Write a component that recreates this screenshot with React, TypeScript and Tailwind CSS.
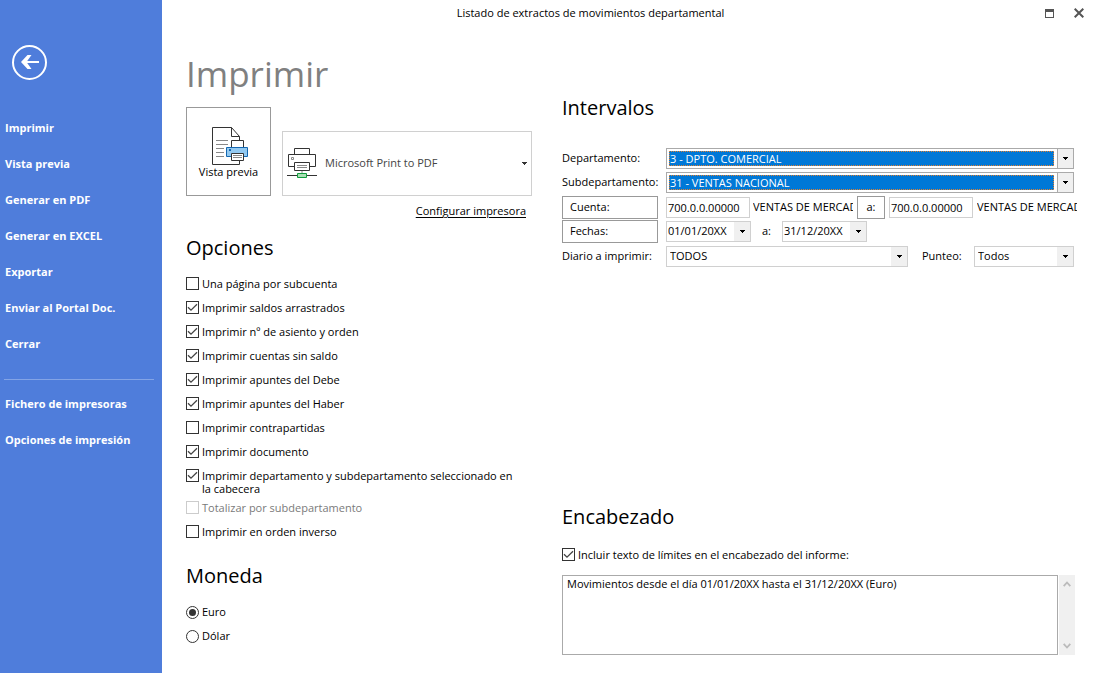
import { useState } from 'react'
import type { ReactNode } from 'react'

const menu = ['Imprimir', 'Vista previa', 'Generar en PDF', 'Generar en EXCEL', 'Exportar', 'Enviar al Portal Doc.', 'Cerrar']
const menuImpresoras = ['Fichero de impresoras', 'Opciones de impresión']

const opciones = [
  { texto: 'Una página por subcuenta', activo: false },
  { texto: 'Imprimir saldos arrastrados', activo: true },
  { texto: 'Imprimir nº de asiento y orden', activo: true },
  { texto: 'Imprimir cuentas sin saldo', activo: true },
  { texto: 'Imprimir apuntes del Debe', activo: true },
  { texto: 'Imprimir apuntes del Haber', activo: true },
  { texto: 'Imprimir contrapartidas', activo: false },
  { texto: 'Imprimir documento', activo: true },
  { texto: 'Imprimir departamento y subdepartamento seleccionado en la cabecera', activo: true },
  { texto: 'Totalizar por subdepartamento', activo: false, bloqueado: true },
  { texto: 'Imprimir en orden inverso', activo: false },
]

function Titulo({ children }: { children: ReactNode }) {
  return <h2 className="text-xl leading-8">{children}</h2>
}

function Casilla({ texto, activo, bloqueado = false }: { texto: string; activo: boolean; bloqueado?: boolean }) {
  const [marcado, setMarcado] = useState(activo)
  return (
    <label className={`flex min-h-6 items-start gap-[3px] pt-[5px] pb-px leading-[13px] ${bloqueado ? 'text-[#7a7a7a]' : ''}`}>
      <span className="grid shrink-0">
        <input
          type="checkbox"
          checked={marcado}
          disabled={bloqueado}
          onChange={(e) => setMarcado(e.target.checked)}
          className="col-start-1 row-start-1 size-[13px] appearance-none border border-[#333] bg-white disabled:border-[#ccc]"
        />
        {marcado && (
          <svg viewBox="0 0 13 13" className="pointer-events-none col-start-1 row-start-1 size-[13px]" fill="none" stroke="#444" strokeWidth="1.3">
            <path d="M2 6.2 5 9.2 11 3.3" />
          </svg>
        )}
      </span>
      <span>{texto}</span>
    </label>
  )
}

function Desplegable({ id, etiqueta, valor, clase, resaltado = false }: { id: string; etiqueta?: string; valor: string; clase: string; resaltado?: boolean }) {
  return (
    <div className={`grid h-[21px] border bg-white ${resaltado ? 'border-[#aaa]' : 'border-[#d0d0d0]'} ${clase}`}>
      <select
        id={id}
        aria-label={etiqueta}
        className={`col-start-1 row-start-1 min-w-0 appearance-none outline-none ${
          resaltado
            ? 'my-0.5 mr-[19px] ml-0.5 border border-dotted border-[#e08030] bg-[#0078d7] leading-3 text-white'
            : etiqueta ? 'pl-px' : 'px-[3px]'
        }`}
      >
        <option>{valor}</option>
      </select>
      <span className={`pointer-events-none col-start-1 row-start-1 flex w-4 items-center justify-center justify-self-end bg-[#f0f0f0] ${resaltado ? 'border-l border-[#aaa]' : ''}`}>
        <svg viewBox="0 0 5 3" className="h-[3px] w-[5px]" shapeRendering="crispEdges">
          <path d="M0 0h5v1H4v1H3v1H2V2H1V1H0z" />
        </svg>
      </span>
    </div>
  )
}

function IconoVistaPrevia() {
  return (
    <svg viewBox="0 0 37 38" className="ml-1 h-[38px] w-[37px]" fill="none" stroke="#333">
      <path d="M19.5.5H.5v37h27V9.5L19.5.5v9h8" fill="#fff" />
      <path d="M4 13.5h12M4 17.5h12M4 21.5h8M4 25.5h8M4 29.5h8" stroke="#888" />
      <path d="M19.5 13.5h12v8h-12z" fill="#fff" />
      <path d="M14.5 20.5h21v9h-21z" fill="#92c9f1" stroke="#1467b0" />
      <path d="M17 23h2" stroke="#1467b0" strokeWidth="2" />
      <path d="M19.5 26.5h12v7h-12z" fill="#fff" />
      <path d="M21 28.5h9M21 30.5h9" stroke="#888" />
    </svg>
  )
}

function IconoImpresora() {
  return (
    <svg viewBox="0 0 30 31" className="h-[31px] w-[30px] shrink-0" fill="none" stroke="#333">
      <path d="M7.5.5h15v6h-15z" fill="#fff" />
      <path d="M1.5 6.5h27v12h-27z" fill="#fff" />
      <path d="M4.5 9.5h2v2h-2z" stroke="#888" />
      <path d="M7.5 14.5h15v8h-15z" fill="#fff" />
      <path d="M10 17.5h10M10 19.5h10M15 23v2" stroke="#888" />
      <path d="M0 27.5h30" />
      <path d="M10.5 25.5h9v4h-9z" fill="#a9dfb4" stroke="#109b3c" />
    </svg>
  )
}

export default function App() {
  const [moneda, setMoneda] = useState('Euro')

  return (
    <div className="flex min-h-screen bg-white font-['Open_Sans',sans-serif] text-[11px] text-black">
      <aside className="w-[162px] shrink-0 bg-[#4f7ddb] pt-[45px] text-white">
        <button aria-label="Volver" className="ml-3 block">
          <svg viewBox="0 0 35 35" className="size-[35px]" fill="none" stroke="#fff">
            <circle cx="17.5" cy="17.5" r="16.5" strokeWidth="2" />
            <path d="M27 17H12" strokeWidth="2" />
            <path d="M9 17 15.500 10H19.500L14.500 17 19.500 24H15.500z" fill="#fff" stroke="none" />
          </svg>
        </button>
        <nav className="mt-[30px] font-bold">
          {menu.map((m) => (
            <button key={m} className="block h-9 w-full pl-[5px] text-left">{m}</button>
          ))}
          <hr className="mt-[17px] mr-2 mb-1.5 ml-1 border-[#83a4e6]" />
          {menuImpresoras.map((m) => (
            <button key={m} className="block h-9 w-full pl-[5px] text-left">{m}</button>
          ))}
        </nav>
      </aside>

      <div className="flex min-w-0 flex-1 flex-col">
        <header className="flex h-[26px] items-center">
          <p className="flex-1 text-center">Listado de extractos de movimientos departamental</p>
          <div className="flex h-5 w-[74px] items-center gap-5 pl-[26px]">
            <button aria-label="Maximizar">
              <svg viewBox="0 0 9 9" className="size-[9px]" fill="#555" shapeRendering="crispEdges">
                <path fillRule="evenodd" d="M0 0h9v9H0zM1 3v5h7V3z" />
              </svg>
            </button>
            <button aria-label="Cerrar ventana">
              <svg viewBox="0 0 10 10" className="size-2.5" stroke="#555" strokeWidth="2">
                <path d="M.7.7l8.6 8.6M9.3.7.7 9.3" />
              </svg>
            </button>
          </div>
        </header>

        <main className="flex gap-[30px] pr-4 pl-6">
          <section className="w-[346px] shrink-0 pt-6 pb-[7px]">
            <h1 className="text-[35px] leading-[48px] text-[#808080]">Imprimir</h1>
            <div className="mt-[9px] flex items-end gap-[11px]">
              <button className="flex h-[89px] w-[85px] shrink-0 flex-col items-center border border-[#999] pt-[19px] leading-[14px]">
                <IconoVistaPrevia />
                Vista previa
              </button>
              <button className="flex h-[65px] flex-1 items-center gap-2 border border-[#d0d0d0] px-1 text-[#444]">
                <IconoImpresora />
                <span className="flex-1 text-left">Microsoft Print to PDF</span>
                <svg viewBox="0 0 5 3" className="h-[3px] w-[5px]" fill="#333" shapeRendering="crispEdges">
                  <path d="M0 0h5v1H4v1H3v1H2V2H1V1H0z" />
                </svg>
              </button>
            </div>
            <div className="mt-1.5 pr-1.5 text-right leading-[18px]">
              <a href="#configurar" className="underline underline-offset-2">Configurar impresora</a>
            </div>

            <div className="mt-3">
              <Titulo>Opciones</Titulo>
              <div className="mt-2 pr-4">
                {opciones.map((o) => <Casilla key={o.texto} {...o} />)}
              </div>
            </div>

            <div className="mt-4">
              <Titulo>Moneda</Titulo>
              <div className="mt-2">
                {['Euro', 'Dólar'].map((m) => (
                  <label key={m} className="flex h-6 items-center gap-[3px]">
                    <input
                      type="radio"
                      name="moneda"
                      checked={moneda === m}
                      onChange={() => setMoneda(m)}
                      className="size-[13px] appearance-none rounded-full border border-[#333] bg-clip-content p-0.5 checked:bg-[#333]"
                    />
                    {m}
                  </label>
                ))}
              </div>
            </div>
          </section>

          <section className="flex min-w-0 flex-1 flex-col justify-between pt-[66px]">
            <div>
              <Titulo>Intervalos</Titulo>
              <div className="mt-[23px]">
                <div className="mb-px flex h-[23px] items-center pr-[3px]">
                  <label htmlFor="departamento" className="w-[104px] shrink-0">Departamento:</label>
                  <Desplegable id="departamento" valor="3 - DPTO. COMERCIAL" clase="flex-1" resaltado />
                </div>
                <div className="mb-px flex h-[23px] items-center pr-[3px]">
                  <label htmlFor="subdepartamento" className="w-[104px] shrink-0">Subdepartamento:</label>
                  <Desplegable id="subdepartamento" valor="31 - VENTAS NACIONAL" clase="flex-1" resaltado />
                </div>
                <div className="flex h-6 items-center">
                  <button className="mr-2 h-[23px] w-24 shrink-0 border border-[#999] pl-[7px] text-left">Cuenta:</button>
                  <input aria-label="Cuenta inicial" defaultValue="700.0.0.00000" className="h-[21px] w-[84px] shrink-0 border border-[#d0d0d0] px-px" />
                  <span className="ml-[3px] min-w-0 flex-1 overflow-hidden whitespace-nowrap">VENTAS DE MERCAD</span>
                  <button className="mx-1 h-[23px] w-7 shrink-0 border border-[#999]">a:</button>
                  <input aria-label="Cuenta final" defaultValue="700.0.0.00000" className="h-[21px] w-[84px] shrink-0 border border-[#d0d0d0] px-px" />
                  <span className="ml-1 min-w-0 flex-1 overflow-hidden whitespace-nowrap">VENTAS DE MERCAD</span>
                </div>
                <div className="flex h-6 items-center">
                  <button className="mr-2 h-[23px] w-24 shrink-0 border border-[#999] pl-[7px] text-left">Fechas:</button>
                  <Desplegable id="fecha-inicial" etiqueta="Fecha inicial" valor="01/01/20XX" clase="w-[85px]" />
                  <span className="w-[31px] text-center">a:</span>
                  <Desplegable id="fecha-final" etiqueta="Fecha final" valor="31/12/20XX" clase="w-[85px]" />
                </div>
                <div className="flex h-[27px] items-center pr-[3px]">
                  <label htmlFor="diario" className="w-[104px] shrink-0">Diario a imprimir:</label>
                  <Desplegable id="diario" valor="TODOS" clase="flex-1" />
                  <label htmlFor="punteo" className="ml-3.5 w-[52px]">Punteo:</label>
                  <Desplegable id="punteo" valor="Todos" clase="w-[100px]" />
                </div>
              </div>
            </div>

            <div>
              <Titulo>Encabezado</Titulo>
              <div className="mt-2.5">
                <Casilla texto="Incluir texto de límites en el encabezado del informe:" activo />
              </div>
              <div className="mt-2 mr-0.5 flex gap-px">
                <textarea
                  aria-label="Texto del encabezado"
                  defaultValue="Movimientos desde el día 01/01/20XX hasta el 31/12/20XX (Euro)"
                  className="h-20 min-w-0 flex-1 resize-none border border-[#aaa] px-1 leading-4 outline-none"
                />
                <div className="flex w-4 flex-col items-center justify-between bg-[#f0f0f0] py-1.5">
                  <svg viewBox="0 0 8 6" className="h-1.5 w-2" fill="none" stroke="#bbb" strokeWidth="1.8">
                    <path d="M.7 5.2 4 1.5l3.3 3.7" />
                  </svg>
                  <svg viewBox="0 0 8 6" className="h-1.5 w-2" fill="none" stroke="#bbb" strokeWidth="1.8">
                    <path d="M.7.8 4 4.5 7.3.8" />
                  </svg>
                </div>
              </div>
            </div>
          </section>
        </main>
      </div>
    </div>
  )
}
